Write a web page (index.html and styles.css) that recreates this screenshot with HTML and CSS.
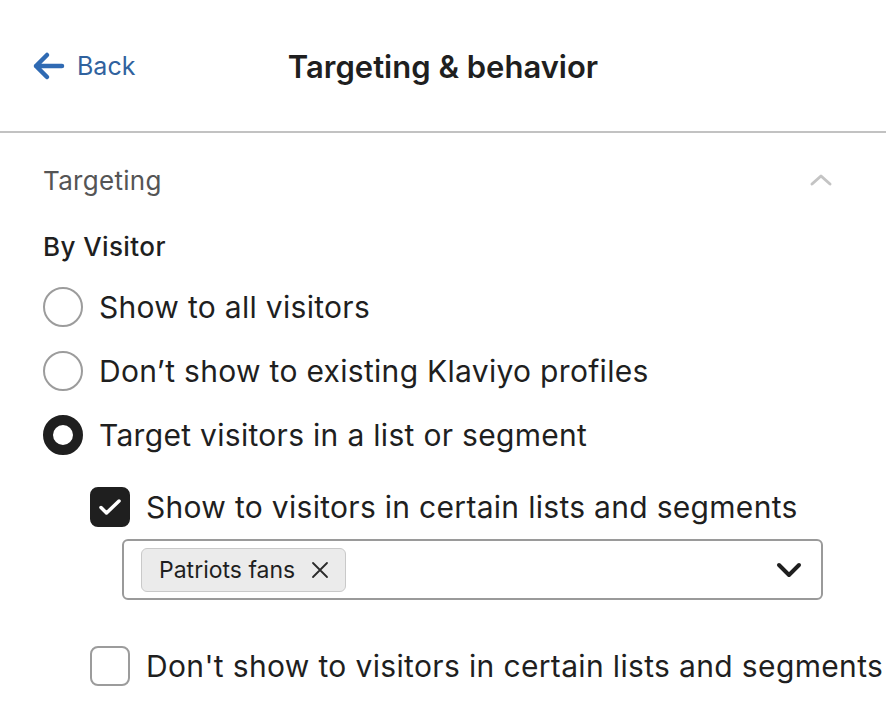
FILE: index.html
```html
<!DOCTYPE html>
<html lang="en">
<head>
    <meta charset="UTF-8">
    <meta name="viewport" content="width=device-width, initial-scale=1.0">
    <title>Targeting &amp; behavior</title>
    <link rel="stylesheet" href="styles.css">
</head>
<body>
    <div id="header">
        <a href="#" class="back">
            <svg width="34" height="30" viewBox="0 0 34 30"><path d="M31 15H5M16 4L5 15l11 11" fill="none" stroke="#2f6ab3" stroke-width="4.5" stroke-linecap="round" stroke-linejoin="round"/></svg>
            <span>Back</span>
        </a>
        <h1>Targeting &amp; behavior</h1>
    </div>
    <div id="content">
        <div class="section-head">
            <span>Targeting</span>
            <svg width="24" height="14" viewBox="0 0 24 14"><path d="M3 11l9-8 9 8" fill="none" stroke="#c4c4c4" stroke-width="3" stroke-linecap="round" stroke-linejoin="round"/></svg>
        </div>
        <h3>By Visitor</h3>
        <div class="option">
            <span class="radio"></span>
            <span>Show to all visitors</span>
        </div>
        <div class="option">
            <span class="radio"></span>
            <span>Don’t show to existing Klaviyo profiles</span>
        </div>
        <div class="option">
            <span class="radio checked"></span>
            <span>Target visitors in a list or segment</span>
        </div>
        <div class="sub">
            <div class="option check-row first">
                <span class="checkbox checked">
                    <svg width="24" height="20" viewBox="0 0 24 20"><path d="M3 10.5l5.5 5.5L21 4" fill="none" stroke="#fff" stroke-width="3.5" stroke-linecap="round" stroke-linejoin="round"/></svg>
                </span>
                <span>Show to visitors in certain lists and segments</span>
            </div>
            <div class="select">
                <span class="chip">Patriots fans
                    <svg width="18" height="18" viewBox="0 0 18 18"><path d="M2 2l14 14M16 2L2 16" fill="none" stroke="#2a2a2a" stroke-width="1.8" stroke-linecap="round"/></svg>
                </span>
                <svg width="28" height="18" viewBox="0 0 28 18"><path d="M4 4l10 10 10-10" fill="none" stroke="#1f1f1f" stroke-width="4" stroke-linecap="round" stroke-linejoin="round"/></svg>
            </div>
            <div class="option check-row last">
                <span class="checkbox"></span>
                <span>Don't show to visitors in certain lists and segments</span>
            </div>
        </div>
    </div>
</body>
</html>
```

FILE: styles.css
```css
body {
    font-family: Inter, "Noto Sans", sans-serif;
    margin: 0;
    padding: 0;
    color: #1f1f1f;
    background-color: white;
    overflow: hidden;
}
#header {
    height: 131px;
    border-bottom: 2px solid #c2c2c2;
    position: relative;
    display: flex;
    align-items: center;
    justify-content: center;
}
#header h1 {
    margin: 0;
    font-size: 31px;
    font-weight: 600;
    padding-top: 2px;
}
.back {
    position: absolute;
    left: 31px;
    top: 51px;
    display: flex;
    align-items: center;
    gap: 12px;
    color: #30629e;
    text-decoration: none;
    font-size: 25px;
}
#content {
    padding: 0 43px;
}
.section-head {
    display: flex;
    justify-content: space-between;
    align-items: center;
    height: 94px;
    color: #555;
    font-size: 26px;
    letter-spacing: 0.3px;
    padding-right: 10px;
}
#content h3 {
    margin: 0 0 8px;
    font-size: 26px;
    font-weight: 500;
    letter-spacing: 0.4px;
    line-height: 40px;
}
.option {
    display: flex;
    align-items: center;
    gap: 16px;
    height: 64px;
    font-size: 30px;
    letter-spacing: 0.3px;
    white-space: nowrap;
}
.radio {
    width: 36px;
    height: 36px;
    border: 2px solid #9c9c9c;
    border-radius: 50%;
    box-sizing: content-box;
    flex-shrink: 0;
}
.radio.checked {
    width: 20px;
    height: 20px;
    border: 10px solid #1f1f1f;
}
.sub {
    padding-left: 47px;
}
.check-row {
    height: 64px;
}
.check-row.first {
    margin-top: 8px;
}
.checkbox {
    width: 36px;
    height: 36px;
    border: 2px solid #9c9c9c;
    border-radius: 8px;
    display: flex;
    align-items: center;
    justify-content: center;
    flex-shrink: 0;
}
.checkbox.checked {
    border-color: #1f1f1f;
    background-color: #1f1f1f;
}
.select {
    margin-left: 32px;
    width: 662px;
    height: 57px;
    border: 2px solid #9a9a9a;
    border-radius: 6px;
    display: flex;
    align-items: center;
    justify-content: space-between;
    padding: 0 18px 0 17px;
}
.chip {
    background-color: #ebebeb;
    border: 1px solid #c9c9c9;
    border-radius: 6px;
    height: 44px;
    padding: 0 16px 0 17px;
    display: flex;
    align-items: center;
    gap: 16px;
    font-size: 23px;
    box-sizing: border-box;
}
.check-row.last {
    margin-top: 34px;
    letter-spacing: 0.35px;
}
```
